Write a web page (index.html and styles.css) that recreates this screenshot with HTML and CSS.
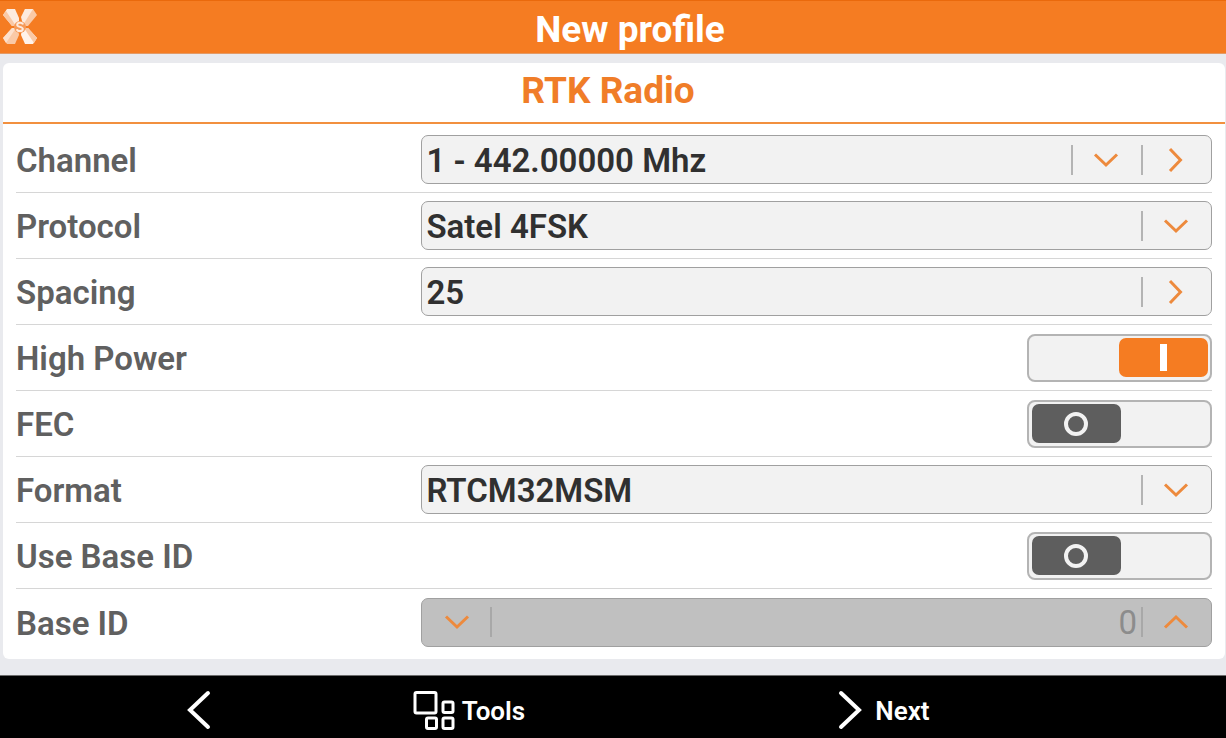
FILE: index.html
```html
<!DOCTYPE html>
<html lang="en">
  <head>
    <meta charset="utf-8" />
    <meta name="viewport" content="width=device-width, initial-scale=1" />
    <title>New profile</title>
    <link rel="stylesheet" href="styles.css" />
  </head>
  <body>
    <!-- shared icons -->
    <svg class="sprite" aria-hidden="true">
      <symbol id="icon-down" viewBox="0 0 26 16">
        <path d="M2 2.500 L13 13 L24 2.500" />
      </symbol>
      <symbol id="icon-up" viewBox="0 0 26 16">
        <path d="M2 13.500 L13 3 L24 13.500" />
      </symbol>
      <symbol id="icon-right" viewBox="0 0 16 26">
        <path d="M2 2 L12.500 13 L2 24" />
      </symbol>
    </svg>

    <header class="topbar">
      <svg class="logo" viewBox="0 0 36 38" aria-hidden="true">
        <path fill="#fdebdf" d="M5 1h8l4 9v8h-7L1 7z" />
        <path fill="#fac9a6" d="M1 7l9 11h4L4 3z" />
        <path fill="#fac9a6" d="M23 1h8l4 6-9 11h-6v-8z" />
        <path fill="#fdebdf" d="M23 1h8L21 17l-2-8z" />
        <path fill="#fac9a6" d="M10 20h6l1 7-4 9H5l-4-6z" />
        <path fill="#fde0cc" d="M10 20h4L4 35l-3-5z" />
        <path fill="#fff3eb" d="M26 20l9 10-4 6h-8l-4-9 1-7z" />
        <path fill="#fac9a6" d="M22 20h4l9 10-3 5z" />
        <circle cx="18" cy="19" r="6" fill="#f69a58" />
        <path
          class="logo-mark"
          d="M21 16.500c-.5-2-5.500-2.500-5.800.3-.3 2.500 5.900 1.600 5.600 4.300-.2 2.700-5.600 2.400-6 .2"
        />
      </svg>
      <h1>New profile</h1>
    </header>

    <main class="panel">
      <h2>RTK Radio</h2>
      <form class="rows" id="radioForm">
        <div class="row">
          <label for="channel">Channel</label>
          <div class="field">
            <div class="select">
              <select id="channel">
                <option>1 - 442.00000 Mhz</option>
              </select>
              <span class="arrow"
                ><svg class="chevron"><use href="#icon-down" /></svg
              ></span>
            </div>
            <button type="button" class="action" aria-label="Edit channel">
              <svg class="chevron side"><use href="#icon-right" /></svg>
            </button>
          </div>
        </div>

        <div class="row">
          <label for="protocol">Protocol</label>
          <div class="field">
            <div class="select">
              <select id="protocol">
                <option>Satel 4FSK</option>
              </select>
              <span class="arrow"
                ><svg class="chevron"><use href="#icon-down" /></svg
              ></span>
            </div>
          </div>
        </div>

        <div class="row">
          <label for="spacing">Spacing</label>
          <div class="field">
            <input type="text" id="spacing" value="25" />
            <button type="button" class="action" aria-label="Edit spacing">
              <svg class="chevron side"><use href="#icon-right" /></svg>
            </button>
          </div>
        </div>

        <div class="row">
          <label for="highPower">High Power</label>
          <input type="checkbox" role="switch" class="toggle" id="highPower" checked />
        </div>

        <div class="row">
          <label for="fec">FEC</label>
          <input type="checkbox" role="switch" class="toggle" id="fec" />
        </div>

        <div class="row">
          <label for="format">Format</label>
          <div class="field">
            <div class="select">
              <select id="format">
                <option>RTCM32MSM</option>
              </select>
              <span class="arrow"
                ><svg class="chevron"><use href="#icon-down" /></svg
              ></span>
            </div>
          </div>
        </div>

        <div class="row">
          <label for="useBaseId">Use Base ID</label>
          <input type="checkbox" role="switch" class="toggle" id="useBaseId" />
        </div>

        <div class="row">
          <label for="baseId">Base ID</label>
          <div class="field disabled">
            <button type="button" class="action first" aria-label="Decrease" disabled>
              <svg class="chevron"><use href="#icon-down" /></svg>
            </button>
            <input type="text" inputmode="numeric" id="baseId" value="0" disabled />
            <button type="button" class="action" aria-label="Increase" disabled>
              <svg class="chevron"><use href="#icon-up" /></svg>
            </button>
          </div>
        </div>
      </form>
    </main>

    <footer class="bottombar">
      <button type="button" class="nav back" aria-label="Back">
        <svg class="nav-arrow" viewBox="0 0 26 42">
          <path d="M22 3 L4 20 L22 37" />
        </svg>
      </button>
      <button type="button" class="nav tools">
        <svg class="nav-grid" viewBox="0 0 42 40">
          <rect x="2" y="1.500" width="21" height="20.500" rx="1.500" />
          <rect x="30" y="11" width="10" height="10.500" rx="1.500" />
          <rect x="13.500" y="27" width="10" height="10.500" rx="1.500" />
          <rect x="30" y="27" width="10" height="10.500" rx="1.500" />
        </svg>
        Tools
      </button>
      <button type="submit" form="radioForm" class="nav next">
        <svg class="nav-arrow" viewBox="0 0 26 42">
          <path d="M4 3 L22 20 L4 37" />
        </svg>
        Next
      </button>
    </footer>
  </body>
</html>
```

FILE: styles.css
```css
*,
*::before,
*::after {
  box-sizing: border-box;
}

body {
  background-color: #e9eaee;
  color: #606060;
  font-family: Roboto, 'Liberation Sans', sans-serif;
  margin: 0;
  min-height: 100vh;
  display: flex;
  flex-direction: column;
}

button,
input,
select {
  font: inherit;
  color: inherit;
  margin: 0;
}

button {
  background: none;
  border: none;
  padding: 0;
  cursor: pointer;
}

.sprite {
  position: absolute;
  width: 0;
  height: 0;
}

.topbar {
  display: flex;
  align-items: center;
  height: 54px;
  padding-left: 2px;
  background-color: #f57c22;
  border-top: 1px solid #ea690c;
  border-bottom: 1px solid #e39a66;
}

.logo {
  width: 36px;
  height: 38px;
}

.logo-mark {
  fill: none;
  stroke: #fdebdf;
  stroke-width: 2;
}

h1,
h2 {
  margin: 0;
  font-size: 37px;
  font-weight: 700;
  line-height: 42px;
  text-align: center;
}

h1 {
  flex: 1;
  padding: 5px 4px 0 0;
  color: #fff;
}

h2 {
  height: 61px;
  padding: 7px 12px 0 0;
  color: #f07d28;
  border-bottom: 2px solid #f2903f;
}

.panel {
  margin: 9px 1px 16px 3px;
  padding-bottom: 4px;
  background-color: #fff;
  border-radius: 6px;
}

.rows {
  padding: 3px 13px 0;
}

.row {
  display: grid;
  grid-template-columns: 20fr 39fr;
  align-items: center;
  height: 66px;
  border-bottom: 1px solid #d6d6d6;
  font-size: 33px;
  font-weight: 600;
  line-height: 40px;
}

.row:last-child {
  border-bottom: none;
}

.row label {
  padding-top: 3px;
}

.field {
  display: flex;
  height: 49px;
  background-color: #f2f2f2;
  border: 1px solid #a0a0a0;
  border-radius: 7px;
  color: #303030;
}

.select {
  position: relative;
  flex: 1;
  display: flex;
}

.select select,
.field input {
  flex: 1;
  min-width: 0;
  padding: 2px 4px 0;
  background: none;
  border: none;
  border-radius: 6px;
  appearance: none;
}

.arrow {
  position: absolute;
  top: 0;
  right: 0;
  bottom: 0;
  pointer-events: none;
}

.arrow,
.action {
  display: flex;
  align-items: center;
  justify-content: center;
  width: 70px;
  background: linear-gradient(#b4b4b4, #b4b4b4) left center / 2px 30px no-repeat;
}

.action.first {
  background-position: right center;
}

.chevron {
  width: 26px;
  height: 16px;
  fill: none;
  stroke: #ed8a3d;
  stroke-width: 3;
}

.chevron.side {
  width: 16px;
  height: 26px;
}

.field.disabled {
  background-color: #c0c0c0;
  color: #8c8c8c;
}

.disabled .action {
  background-image: linear-gradient(#a8a8a8, #a8a8a8);
}

.disabled input {
  font-weight: 400;
  text-align: right;
}

.toggle {
  position: relative;
  appearance: none;
  justify-self: end;
  width: 185px;
  height: 48px;
  background-color: #f2f2f2;
  border: 2px solid #b4b4b4;
  border-radius: 8px;
  cursor: pointer;
}

/* knob */
.toggle::before {
  content: '';
  position: absolute;
  top: 2px;
  left: 3px;
  width: 89px;
  height: 39px;
  background-color: #5e5e5e;
  border-radius: 7px;
}

/* off mark */
.toggle::after {
  content: '';
  position: absolute;
  top: 10px;
  left: 35px;
  width: 24px;
  height: 24px;
  border: 4px solid #f2f2f2;
  border-radius: 50%;
}

.toggle:checked::before {
  left: auto;
  right: 2px;
  background-color: #f57c22;
}

/* on mark */
.toggle:checked::after {
  top: 8px;
  left: auto;
  right: 43px;
  width: 7px;
  height: 27px;
  border: none;
  border-radius: 0;
  background-color: #fff;
}

.bottombar {
  display: grid;
  grid-template-columns: repeat(3, 1fr);
  height: 64px;
  margin-top: auto;
  background-color: #000;
  border-top: 1px solid #6c6c6c;
}

.nav {
  display: flex;
  align-items: center;
  color: #fff;
  font-size: 26px;
  font-weight: 600;
  padding-top: 6px;
}

.nav svg {
  fill: none;
  stroke: #fff;
}

.back {
  justify-content: center;
  padding-right: 10px;
}

.tools {
  gap: 7px;
  padding-left: 4px;
}

.next {
  gap: 12px;
  padding-left: 20px;
}

.nav-arrow {
  width: 26px;
  height: 42px;
  stroke-width: 4;
  stroke-linecap: round;
}

.nav-grid {
  width: 42px;
  height: 40px;
  stroke-width: 3;
}
```
